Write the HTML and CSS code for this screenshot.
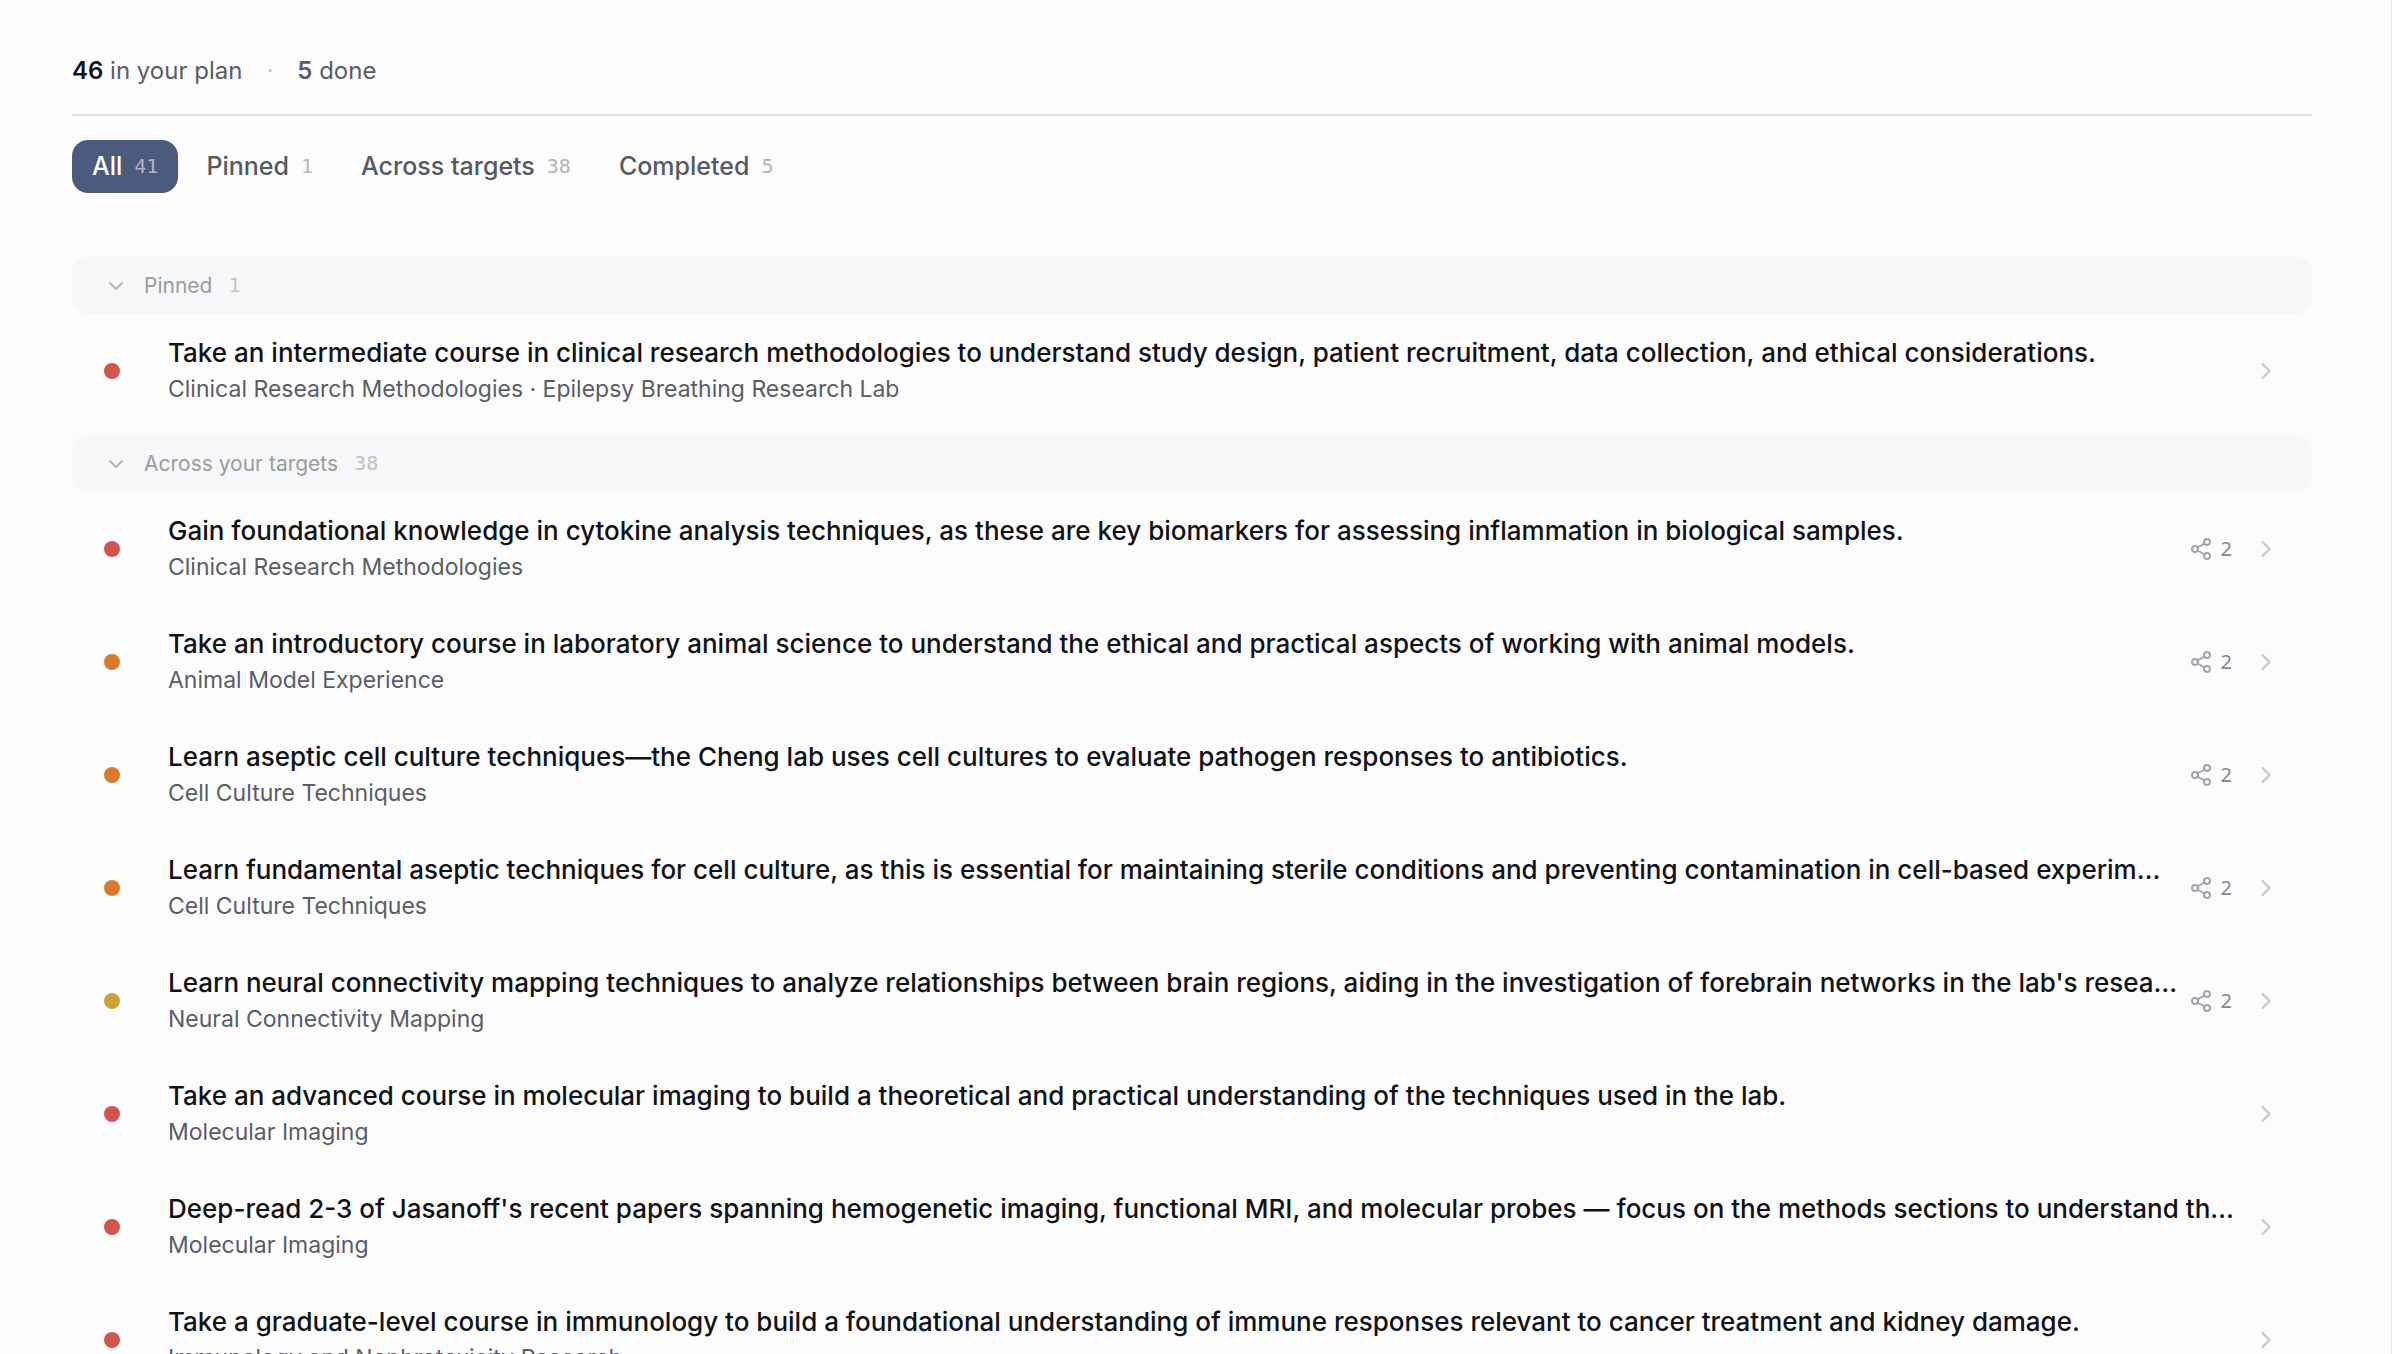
FILE: index.html
```html
<!DOCTYPE html>
<html lang="en">
<head>
    <meta charset="utf-8">
    <meta name="viewport" content="width=device-width, initial-scale=1">
    <title>Your plan</title>
    <link rel="stylesheet" href="styles.css">
</head>
<body>
    <!-- shared icons -->
    <svg class="icon-defs" aria-hidden="true">
        <symbol id="chevron-right" viewBox="0 0 24 24"><path d="m9 18 6-6-6-6"/></symbol>
        <symbol id="chevron-down" viewBox="0 0 24 24"><path d="m6 9 6 6 6-6"/></symbol>
        <symbol id="share" viewBox="0 0 24 24">
            <circle cx="18" cy="5" r="3"/>
            <circle cx="6" cy="12" r="3"/>
            <circle cx="18" cy="19" r="3"/>
            <path d="m8.59 13.51 6.83 3.98M15.41 6.51l-6.82 3.98"/>
        </symbol>
    </svg>

    <main class="plan">
        <!-- totals -->
        <div class="summary">
            <span><strong class="total">46</strong> in your plan</span>
            <span class="separator">·</span>
            <span><strong>5</strong> done</span>
        </div>

        <!-- filters -->
        <nav class="filters">
            <button type="button" class="filter active">All <span class="count">41</span></button>
            <button type="button" class="filter">Pinned <span class="count">1</span></button>
            <button type="button" class="filter">Across targets <span class="count">38</span></button>
            <button type="button" class="filter">Completed <span class="count">5</span></button>
        </nav>

        <section class="group">
            <button type="button" class="group-header">
                <svg class="icon"><use href="#chevron-down"/></svg>
                Pinned <span class="count">1</span>
            </button>
            <a href="#" class="item">
                <span class="dot red"></span>
                <span class="text">
                    <span class="title">Take an intermediate course in clinical research methodologies to understand study design, patient recruitment, data collection, and ethical considerations.</span>
                    <span class="skill">Clinical Research Methodologies · Epilepsy Breathing Research Lab</span>
                </span>
                <svg class="icon arrow"><use href="#chevron-right"/></svg>
            </a>
        </section>

        <section class="group">
            <button type="button" class="group-header">
                <svg class="icon"><use href="#chevron-down"/></svg>
                Across your targets <span class="count">38</span>
            </button>
            <a href="#" class="item">
                <span class="dot red"></span>
                <span class="text">
                    <span class="title">Gain foundational knowledge in cytokine analysis techniques, as these are key biomarkers for assessing inflammation in biological samples.</span>
                    <span class="skill">Clinical Research Methodologies</span>
                </span>
                <span class="shared"><svg class="icon"><use href="#share"/></svg>2</span>
                <svg class="icon arrow"><use href="#chevron-right"/></svg>
            </a>
            <a href="#" class="item">
                <span class="dot orange"></span>
                <span class="text">
                    <span class="title">Take an introductory course in laboratory animal science to understand the ethical and practical aspects of working with animal models.</span>
                    <span class="skill">Animal Model Experience</span>
                </span>
                <span class="shared"><svg class="icon"><use href="#share"/></svg>2</span>
                <svg class="icon arrow"><use href="#chevron-right"/></svg>
            </a>
            <a href="#" class="item">
                <span class="dot orange"></span>
                <span class="text">
                    <span class="title">Learn aseptic cell culture techniques—the Cheng lab uses cell cultures to evaluate pathogen responses to antibiotics.</span>
                    <span class="skill">Cell Culture Techniques</span>
                </span>
                <span class="shared"><svg class="icon"><use href="#share"/></svg>2</span>
                <svg class="icon arrow"><use href="#chevron-right"/></svg>
            </a>
            <a href="#" class="item">
                <span class="dot orange"></span>
                <span class="text">
                    <span class="title">Learn fundamental aseptic techniques for cell culture, as this is essential for maintaining sterile conditions and preventing contamination in cell-based experim…</span>
                    <span class="skill">Cell Culture Techniques</span>
                </span>
                <span class="shared"><svg class="icon"><use href="#share"/></svg>2</span>
                <svg class="icon arrow"><use href="#chevron-right"/></svg>
            </a>
            <a href="#" class="item">
                <span class="dot yellow"></span>
                <span class="text">
                    <span class="title">Learn neural connectivity mapping techniques to analyze relationships between brain regions, aiding in the investigation of forebrain networks in the lab's resea…</span>
                    <span class="skill">Neural Connectivity Mapping</span>
                </span>
                <span class="shared"><svg class="icon"><use href="#share"/></svg>2</span>
                <svg class="icon arrow"><use href="#chevron-right"/></svg>
            </a>
            <a href="#" class="item">
                <span class="dot red"></span>
                <span class="text">
                    <span class="title">Take an advanced course in molecular imaging to build a theoretical and practical understanding of the techniques used in the lab.</span>
                    <span class="skill">Molecular Imaging</span>
                </span>
                <svg class="icon arrow"><use href="#chevron-right"/></svg>
            </a>
            <a href="#" class="item">
                <span class="dot red"></span>
                <span class="text">
                    <span class="title">Deep-read 2-3 of Jasanoff's recent papers spanning hemogenetic imaging, functional MRI, and molecular probes — focus on the methods sections to understand th…</span>
                    <span class="skill">Molecular Imaging</span>
                </span>
                <svg class="icon arrow"><use href="#chevron-right"/></svg>
            </a>
            <a href="#" class="item">
                <span class="dot red"></span>
                <span class="text">
                    <span class="title">Take a graduate-level course in immunology to build a foundational understanding of immune responses relevant to cancer treatment and kidney damage.</span>
                    <span class="skill">Immunology and Nephrotoxicity Research</span>
                </span>
                <svg class="icon arrow"><use href="#chevron-right"/></svg>
            </a>
        </section>
    </main>
</body>
</html>
```

FILE: styles.css
```css
* {
    box-sizing: border-box;
}

html {
    height: 100%;
    overflow: hidden;
}

body {
    margin: 0;
    height: 100%;
    overflow: hidden;
    background-color: #fcfcfd;
    border-right: 1px solid #ebebee;
    color: #5a5d66;
    font-family: Inter, "Liberation Sans", sans-serif;
    font-size: 24px;
}

button {
    border: 0;
    background: none;
    font-family: inherit;
    cursor: pointer;
}

.icon-defs {
    display: none;
}

.icon {
    flex: none;
    width: 24px;
    height: 24px;
    fill: none;
    stroke: currentColor;
    stroke-width: 2;
    stroke-linecap: round;
    stroke-linejoin: round;
}

.plan {
    padding: 53px 79px 0 72px;
}

/* totals */
.summary {
    display: flex;
    gap: 24px;
    padding-bottom: 25px;
    border-bottom: 2px solid #dddde4;
    line-height: 36px;
}

.summary strong {
    font-weight: 600;
}

.summary .total {
    color: #111216;
}

.separator {
    color: #c4c5ca;
}

.count {
    color: #b2b4ba;
    font-family: "DejaVu Sans Mono", monospace;
    font-size: 20px;
    font-weight: 400;
}

/* filters */
.filters {
    display: flex;
    gap: 8px;
    margin: 24px 0 64px;
}

.filter {
    display: flex;
    align-items: center;
    gap: 12px;
    padding: 0 20px;
    border-radius: 16px;
    color: #555962;
    font-size: 25px;
    font-weight: 500;
    line-height: 53px;
}

.filter.active {
    background-color: #4c5a7d;
    color: #ffffff;
}

/* groups */
.group {
    margin-bottom: 8px;
}

.group-header {
    display: flex;
    align-items: center;
    gap: 16px;
    width: 100%;
    padding: 0 32px;
    border-radius: 16px;
    background-color: #f6f7f9;
    color: #999ba1;
    font-size: 21px;
    line-height: 57px;
}

.group-header .icon {
    color: #b4b6bc;
}

.group-header .count {
    color: #c0c2c7;
}

.item {
    display: flex;
    align-items: center;
    height: 113px;
    padding: 0 32px;
    color: inherit;
    text-decoration: none;
}

.dot {
    flex: none;
    width: 16px;
    height: 16px;
    margin-right: 48px;
    border-radius: 50%;
}

.red {
    background-color: #d3544f;
}

.orange {
    background-color: #d97a2b;
}

.yellow {
    background-color: #cda434;
}

.text {
    flex: 1;
    min-width: 0;
    margin-right: 8px;
}

.title,
.skill {
    display: block;
    overflow: hidden;
    text-overflow: ellipsis;
    white-space: nowrap;
    line-height: 36px;
}

.title {
    color: #111216;
    font-size: 26px;
    font-weight: 500;
}

.skill {
    font-size: 23px;
}

.shared {
    display: flex;
    align-items: center;
    gap: 8px;
    margin-right: 20px;
    color: #85878e;
    font-family: "Noto Sans", sans-serif;
    font-size: 20px;
}

.shared .icon {
    color: #a2a4ac;
}

.arrow {
    width: 28px;
    height: 28px;
    color: #c8c9cc;
}
```
